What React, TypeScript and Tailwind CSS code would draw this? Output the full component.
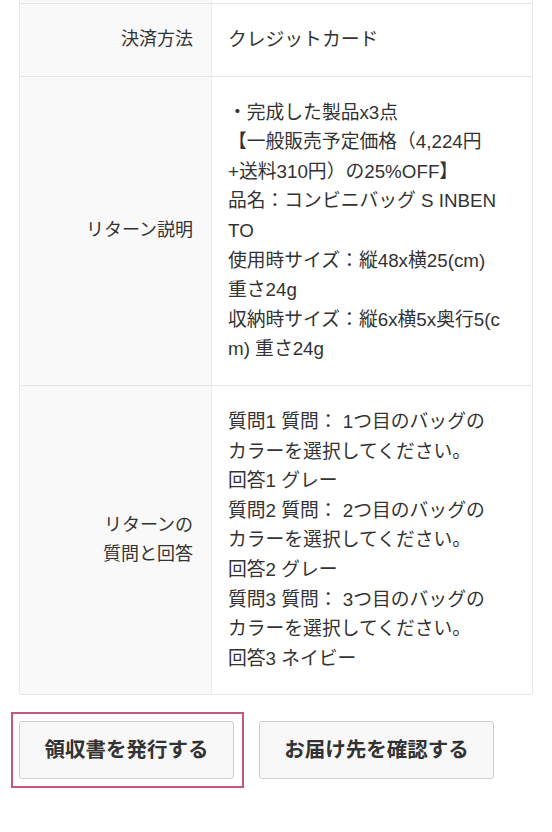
import React from 'react';

const font = { fontFamily: '"Liberation Sans", "Noto Sans CJK JP", sans-serif' };

// Lines as they wrap in the narrow value column
const rows: { label: string[]; value: string[] }[] = [
  { label: ['決済方法'], value: ['クレジットカード'] },
  {
    label: ['リターン説明'],
    value: [
      '・完成した製品x3点',
      '【一般販売予定価格（4,224円',
      '+送料310円）の25%OFF】',
      '品名：コンビニバッグ S INBEN',
      'TO',
      '使用時サイズ：縦48x横25(cm)',
      '重さ24g',
      '収納時サイズ：縦6x横5x奥行5(c',
      'm) 重さ24g',
    ],
  },
  {
    label: ['リターンの', '質問と回答'],
    value: [
      '質問1 質問： 1つ目のバッグの',
      'カラーを選択してください。',
      '回答1 グレー',
      '質問2 質問： 2つ目のバッグの',
      'カラーを選択してください。',
      '回答2 グレー',
      '質問3 質問： 3つ目のバッグの',
      'カラーを選択してください。',
      '回答3 ネイビー',
    ],
  },
];

export default function App() {
  return (
    <div className="min-h-screen bg-white text-[#333]" style={font}>
      <div className="px-[19px]">
        {/* Order detail table (scrolled, previous row cut off) */}
        <div className="border-x border-b border-[#e7e7e7] rounded-b-[3px] overflow-hidden">
          <div className="grid grid-cols-[191px_1fr] h-[3px]">
            <div className="bg-[#f9f9f9]" />
            <div className="border-l border-[#ececec] bg-white" />
          </div>
          {rows.map((row, i) => (
            <div key={i} className="grid grid-cols-[191px_1fr] border-t border-[#e7e7e7]">
              <div className="bg-[#f9f9f9] flex items-center justify-end pr-[18px] text-right text-[18px] leading-[29.6px]">
                <div>
                  {row.label.map((l) => (
                    <div key={l}>{l}</div>
                  ))}
                </div>
              </div>
              <div className="border-l border-[#ececec] bg-white pl-[16px] pr-[8px] py-[21px] text-[18.8px] leading-[29.6px] whitespace-nowrap">
                {row.value.map((v, j) => (
                  <div key={j}>{v}</div>
                ))}
              </div>
            </div>
          ))}
        </div>

        {/* Actions */}
        <div className="flex gap-[25px] mt-[26px]">
          <button className="relative w-[215px] h-[58px] rounded-[3px] border border-[#cfcfcf] bg-[#f8f8f8] text-[20.5px] font-bold text-[#333]">
            領収書を発行する
            <span className="absolute -top-[10px] -bottom-[10px] -left-[9px] -right-[11px] border-2 border-[#c4577f] pointer-events-none" />
          </button>
          <button className="w-[235px] h-[58px] rounded-[3px] border border-[#cfcfcf] bg-[#f8f8f8] text-[20.5px] font-bold text-[#333]">
            お届け先を確認する
          </button>
        </div>
      </div>
    </div>
  );
}
